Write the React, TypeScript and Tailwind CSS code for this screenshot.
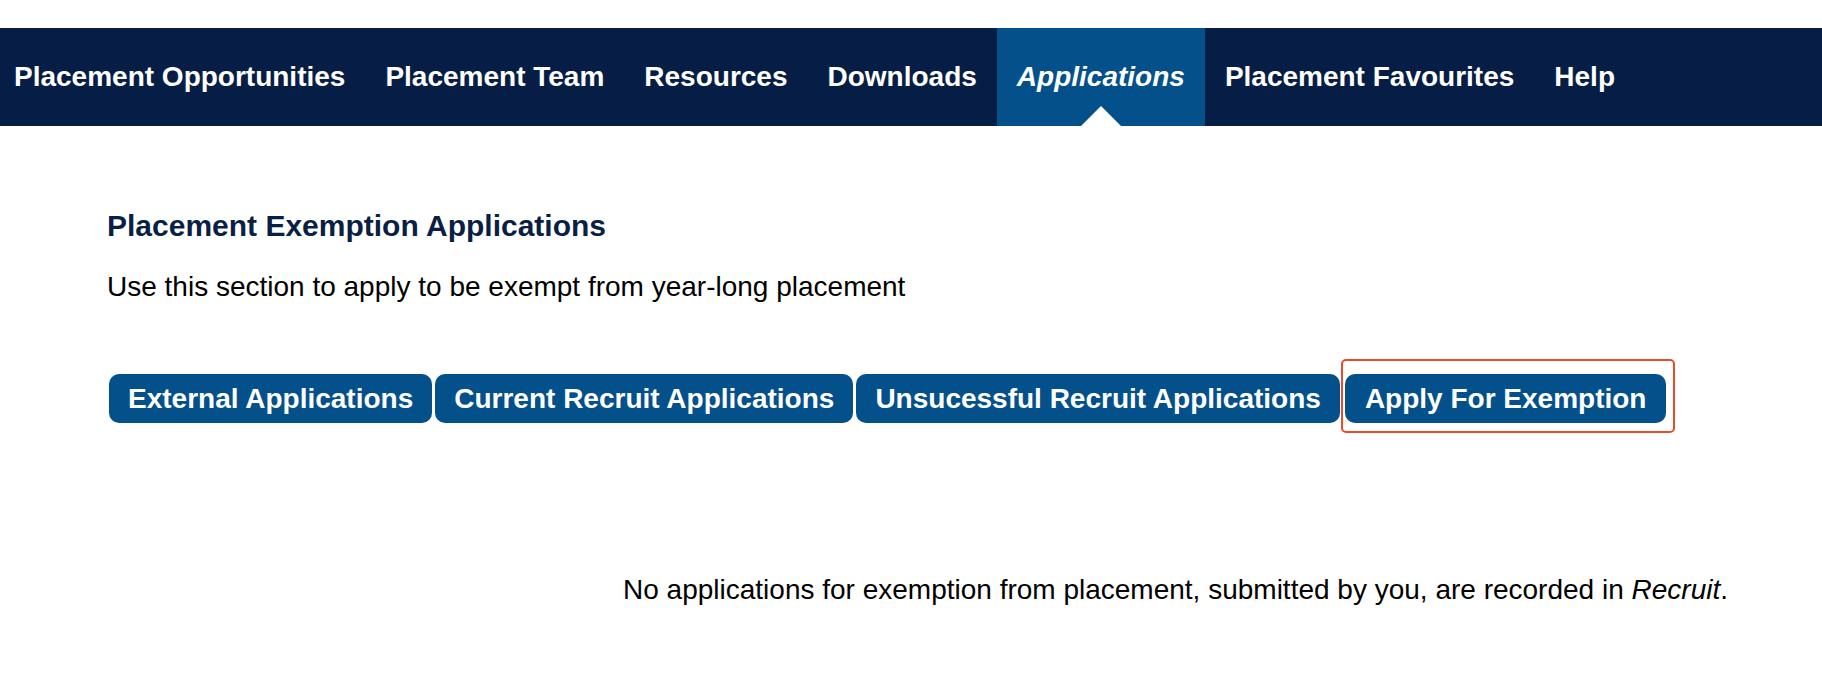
import React from "react";

const navItems = [
  "Placement Opportunities",
  "Placement Team",
  "Resources",
  "Downloads",
  "Applications",
  "Placement Favourites",
  "Help",
];

export default function App() {
  return (
    <div
      className="min-h-[674px] bg-white text-black"
      style={{ fontFamily: '"Liberation Sans", Arial, sans-serif' }}
    >
      <div className="h-[28px]" />
      <nav className="flex h-[98px] items-stretch bg-[#061e45] pl-[14px]">
        {navItems.map((item, i) => {
          const active = item === "Applications";
          return (
            <div
              key={item}
              className={`relative flex items-center text-[28px] font-bold leading-[32px] text-white ${
                i === 0 ? "pr-[20px]" : "px-[20px]"
              } ${active ? "bg-[#03508b] italic" : ""}`}
            >
              {item}
              {active && (
                <span className="absolute bottom-0 left-1/2 h-0 w-0 -translate-x-1/2 border-x-[20px] border-b-[20px] border-x-transparent border-b-white" />
              )}
            </div>
          );
        })}
      </nav>

      <main className="pl-[107px] pr-[94px]">
        <h1 className="mt-[82px] text-[30px] font-bold leading-[36px] text-[#0a1f44]">
          Placement Exemption Applications
        </h1>
        <p className="mt-[25px] text-[28px] leading-[36px]">
          Use this section to apply to be exempt from year-long placement
        </p>

        <div className="ml-[2px] mt-[69px] flex items-start gap-[3px]">
          {[
            "External Applications",
            "Current Recruit Applications",
            "Unsucessful Recruit Applications",
          ].map((b) => (
            <button
              key={b}
              className="h-[49px] rounded-[10px] bg-[#03508b] px-[19px] text-[28px] font-bold leading-[32px] text-white"
            >
              {b}
            </button>
          ))}
          <button className="relative ml-[2px] h-[49px] rounded-[10px] bg-[#03508b] px-[20px] text-[28px] font-bold leading-[32px] text-white">
            Apply For Exemption
            <span className="pointer-events-none absolute -bottom-[10px] -left-[4px] -right-[9px] -top-[15px] rounded-[5px] border-2 border-[#ee4a26]" />
          </button>
        </div>

        <p className="mt-[149px] text-right text-[28px] leading-[36px]">
          No applications for exemption from placement, submitted by you, are
          recorded in <i>Recruit</i>.
        </p>
      </main>
    </div>
  );
}
